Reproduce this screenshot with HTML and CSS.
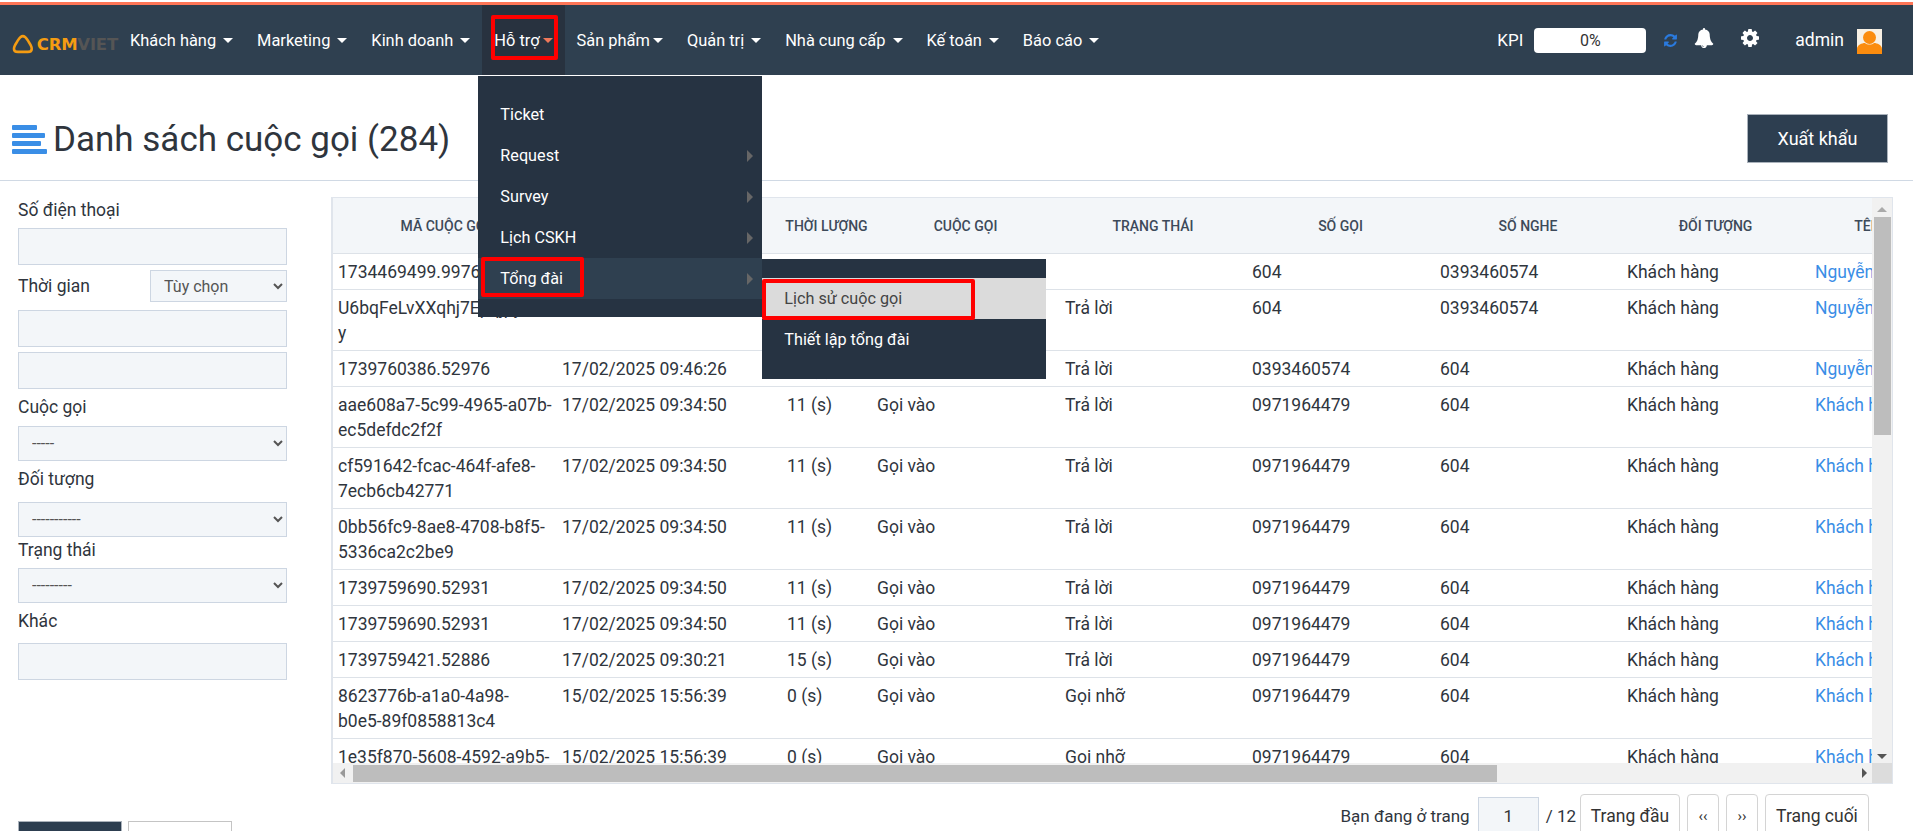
FILE: index.html
```html
<!DOCTYPE html>
<html lang="vi">
<head>
  <meta charset="UTF-8" />
  <title>Danh sách cuộc gọi</title>
  <link rel="stylesheet" href="styles.css">
</head>
<body>
  <nav class="navbar">
    <a class="logo">
      <svg class="logo-mark" viewBox="0 0 22 20"><path d="M11 2 C8 2 7 5 5 8 C3 11 2 13 2 15 C2 17 4 18 6 18 L16 18 C18 18 20 17 20 15 C20 13 19 11 17 8 C15 5 14 2 11 2 Z" /></svg>
      <span class="logo-crm">CRM</span><span class="logo-viet">VIET</span>
    </a>
    <ul class="nav-list">
      <li class="nav-item">Khách hàng <i class="caret"></i></li>
      <li class="nav-item">Marketing <i class="caret"></i></li>
      <li class="nav-item">Kinh doanh <i class="caret"></i></li>
      <li class="nav-item active">Hỗ trợ<i class="caret tight"></i>
        <span class="mark mark-nav"></span>
        <div class="menu">
          <div class="menu-row">Ticket</div>
          <div class="menu-row has-sub">Request</div>
          <div class="menu-row has-sub">Survey</div>
          <div class="menu-row has-sub">Lịch CSKH</div>
          <div class="menu-row has-sub open">Tổng đài
            <span class="mark mark-row"></span>
            <div class="menu submenu">
              <div class="menu-row current">Lịch sử cuộc gọi
                <span class="mark mark-sub"></span>
              </div>
              <div class="menu-row">Thiết lập tổng đài</div>
            </div>
          </div>
        </div>
      </li>
      <li class="nav-item">Sản phẩm<i class="caret tight"></i></li>
      <li class="nav-item">Quản trị <i class="caret"></i></li>
      <li class="nav-item">Nhà cung cấp <i class="caret"></i></li>
      <li class="nav-item">Kế toán <i class="caret"></i></li>
      <li class="nav-item">Báo cáo <i class="caret"></i></li>
    </ul>
    <div class="nav-right">
      <span class="kpi-label">KPI</span>
      <span class="kpi-box">0%</span>
      <svg class="ico ico-refresh" viewBox="0 0 1792 1792"><path d="M1639 1056q0 5-1 7-64 268-268 434.5t-478 166.5q-146 0-282.5-55t-243.5-157l-129 129q-19 19-45 19t-45-19-19-45v-448q0-26 19-45t45-19h448q26 0 45 19t19 45-19 45l-137 137q71 66 161 102t187 36q134 0 250-65t186-179q11-17 53-117 8-23 30-23h192q13 0 22.5 9.5t9.5 22.5zm25-800v448q0 26-19 45t-45 19h-448q-26 0-45-19t-19-45 19-45l138-138q-148-137-349-137-134 0-250 65t-186 179q-11 17-53 117-8 23-30 23h-199q-13 0-22.5-9.5t-9.5-22.5v-7q65-268 270-434.5t480-166.5q146 0 284 55.5t245 156.5l130-129q19-19 45-19t45 19 19 45z"/></svg>
      <svg class="ico ico-bell" viewBox="0 0 1792 1792"><path d="M912 1696q0-16-16-16-59 0-101.5-42.5t-42.5-101.5q0-16-16-16t-16 16q0 73 51.5 124.5t124.5 51.5q16 0 16-16zm816-288q0 52-38 90t-90 38h-448q0 106-75 181t-181 75-181-75-75-181h-448q-52 0-90-38t-38-90q50-42 91-88t85-119.5 74.5-158.5 50-206 19.5-260q0-152 117-282.5t307-158.5q-8-19-8-39 0-40 28-68t68-28 68 28 28 68q0 20-8 39 190 28 307 158.5t117 282.5q0 139 19.5 260t50 206 74.5 158.5 85 119.5 91 88z"/></svg>
      <svg class="ico ico-gear" viewBox="0 0 1536 1536"><path d="M1024 768q0-106-75-181t-181-75-181 75-75 181 75 181 181 75 181-75 75-181zm512-109v222q0 12-8 23t-20 13l-185 28q-19 54-39 91 35 50 107 138 10 12 10 25t-9 23q-27 37-99 108t-94 71q-12 0-26-9l-138-108q-44 23-91 38-16 136-29 186-7 28-36 28h-222q-14 0-24.5-8.5t-11.5-21.5l-28-184q-49-16-90-37l-141 107q-10 9-25 9-14 0-25-11-126-114-165-168-7-10-7-23 0-12 8-23 15-21 51-66.5t54-70.5q-27-50-41-99l-183-27q-13-2-21-12.5t-8-23.5v-222q0-12 8-23t19-13l186-28q14-46 39-92-40-57-107-138-10-12-10-24 0-10 9-23 26-36 98.5-107.5t94.5-71.5q13 0 26 10l138 107q44-23 91-38 16-136 29-186 7-28 36-28h222q14 0 24.5 8.5t11.5 21.5l28 184q49 16 90 37l142-107q9-9 24-9 13 0 25 10 129 119 165 170 7 8 7 22 0 12-8 23-15 21-51 66.5t-54 70.5q26 50 41 98l183 28q13 2 21 12.5t8 23.5z"/></svg>
      <span class="user-name">admin</span>
      <svg class="avatar" viewBox="0 0 25 25"><rect width="25" height="25" fill="#f7f0e4"/><circle cx="12.5" cy="8.5" r="6.5" fill="#fb8c0e"/><path d="M0 25 V20 C0 16 5 14 8 14 C10 16 15 16 17 14 C20 14 25 16 25 20 V25 Z" fill="#fb8c0e"/></svg>
    </div>
  </nav>

  <header class="page-head">
    <h1 class="page-title">
      <span class="title-icon"><i></i><i></i><i></i><i></i></span>
      Danh sách cuộc gọi (284)
    </h1>
    <button type="button" class="btn-dark btn-export">Xuất khẩu</button>
  </header>

  <div class="content">
    <aside class="filters">
      <label class="flabel nudge">Số điện thoại</label>
      <input type="text" class="finput" />
      <div class="time-row">
        <label class="flabel">Thời gian</label>
        <select class="fselect time-select"><option>Tùy chọn</option></select>
      </div>
      <input type="text" class="finput mt-8" />
      <input type="text" class="finput mt-5" />
      <label class="flabel mt-6">Cuộc gọi</label>
      <select class="fselect"><option>-----</option></select>
      <label class="flabel mt-6 low">Đối tượng</label>
      <select class="fselect"><option>-----------</option></select>
      <label class="flabel mt-1">Trạng thái</label>
      <select class="fselect sel-close"><option>---------</option></select>
      <label class="flabel mt-5 low nudge">Khác</label>
      <input type="text" class="finput" />
      <div class="filter-btns">
        <button type="button" class="btn-dark btn-search">Tìm kiếm</button>
        <button type="button" class="btn-light">Xóa bộ lọc</button>
      </div>
    </aside>

    <main class="main-col">
      <div class="table-box">
        <div class="table-view">
          <table class="calls">
            <thead>
              <tr>
                <th>Mã cuộc gọi</th><th>Thời gian</th><th>Thời lượng</th><th>Cuộc gọi</th><th>Trạng thái</th><th>Số gọi</th><th>Số nghe</th><th>Đối tượng</th><th>Tên</th>
              </tr>
            </thead>
            <tbody>
              <tr><td>1734469499.99769</td><td>17/02/2025 09:50:12</td><td>0 (s)</td><td>Gọi ra</td><td></td><td>604</td><td>0393460574</td><td>Khách hàng</td><td><a>Nguyễn Thị Hoa</a></td></tr>
              <tr><td>U6bqFeLvXXqhj7Epqjpy<br>y</td><td>17/02/2025 09:48:40</td><td>32 (s)</td><td>Gọi ra</td><td>Trả lời</td><td>604</td><td>0393460574</td><td>Khách hàng</td><td><a>Nguyễn Thị Hoa</a></td></tr>
              <tr><td>1739760386.52976</td><td>17/02/2025 09:46:26</td><td>11 (s)</td><td>Gọi vào</td><td>Trả lời</td><td>0393460574</td><td>604</td><td>Khách hàng</td><td><a>Nguyễn Thị Hoa</a></td></tr>
              <tr><td>aae608a7-5c99-4965-a07b-ec5defdc2f2f</td><td>17/02/2025 09:34:50</td><td>11 (s)</td><td>Gọi vào</td><td>Trả lời</td><td>0971964479</td><td>604</td><td>Khách hàng</td><td><a>Khách hàng mới</a></td></tr>
              <tr><td>cf591642-fcac-464f-afe8-7ecb6cb42771</td><td>17/02/2025 09:34:50</td><td>11 (s)</td><td>Gọi vào</td><td>Trả lời</td><td>0971964479</td><td>604</td><td>Khách hàng</td><td><a>Khách hàng mới</a></td></tr>
              <tr><td>0bb56fc9-8ae8-4708-b8f5-5336ca2c2be9</td><td>17/02/2025 09:34:50</td><td>11 (s)</td><td>Gọi vào</td><td>Trả lời</td><td>0971964479</td><td>604</td><td>Khách hàng</td><td><a>Khách hàng mới</a></td></tr>
              <tr><td>1739759690.52931</td><td>17/02/2025 09:34:50</td><td>11 (s)</td><td>Gọi vào</td><td>Trả lời</td><td>0971964479</td><td>604</td><td>Khách hàng</td><td><a>Khách hàng mới</a></td></tr>
              <tr><td>1739759690.52931</td><td>17/02/2025 09:34:50</td><td>11 (s)</td><td>Gọi vào</td><td>Trả lời</td><td>0971964479</td><td>604</td><td>Khách hàng</td><td><a>Khách hàng mới</a></td></tr>
              <tr><td>1739759421.52886</td><td>17/02/2025 09:30:21</td><td>15 (s)</td><td>Gọi vào</td><td>Trả lời</td><td>0971964479</td><td>604</td><td>Khách hàng</td><td><a>Khách hàng mới</a></td></tr>
              <tr><td>8623776b-a1a0-4a98-<wbr>b0e5-89f0858813c4</td><td>15/02/2025 15:56:39</td><td>0 (s)</td><td>Gọi vào</td><td>Gọi nhỡ</td><td>0971964479</td><td>604</td><td>Khách hàng</td><td><a>Khách hàng mới</a></td></tr>
              <tr><td>1e35f870-5608-4592-a9b5-3d1c7a90be21</td><td>15/02/2025 15:56:39</td><td>0 (s)</td><td>Gọi vào</td><td>Gọi nhỡ</td><td>0971964479</td><td>604</td><td>Khách hàng</td><td><a>Khách hàng mới</a></td></tr>
            </tbody>
          </table>
        </div>
        <div class="vbar">
          <i class="arrow arrow-up"></i>
          <div class="vthumb"></div>
          <i class="arrow arrow-down"></i>
        </div>
        <div class="hbar">
          <i class="arrow arrow-left"></i>
          <div class="hthumb"></div>
          <i class="arrow arrow-right"></i>
        </div>
        <div class="corner"></div>
      </div>

      <div class="pager">
        <span class="pager-text">Bạn đang ở trang</span>
        <input type="text" class="pager-input" value="1" />
        <span class="pager-total">/ 12</span>
        <button type="button" class="page-btn btn-first">Trang đầu</button>
        <button type="button" class="page-btn btn-step">‹‹</button>
        <button type="button" class="page-btn btn-step">››</button>
        <button type="button" class="page-btn btn-last">Trang cuối</button>
      </div>
    </main>
  </div>
</body>
</html>
```

FILE: styles.css
```css
html, body {
  margin: 0;
  height: 831px;
  overflow: hidden;
  background: #fff;
}
body {
  font-family: Roboto, "Liberation Sans", sans-serif;
  font-size: 17.5px;
  color: #2f353d;
}

/* top bar */
.navbar {
  display: flex;
  align-items: center;
  height: 70px;
  margin-top: 2px;
  border-top: 3px solid #ff7657;
  background: #2f4050;
  color: #fff;
}
.logo {
  display: flex;
  align-items: center;
  width: 118px;
  padding: 8px 0 0 12px;
  box-sizing: border-box;
  flex-shrink: 0;
  font-family: "DejaVu Sans", sans-serif;
  font-weight: 700;
  font-size: 16.5px;
  letter-spacing: -0.2px;
}
.logo-mark {
  width: 22px;
  height: 22px;
  margin-right: 3px;
  fill: none;
  stroke: #f59c12;
  stroke-width: 2.6;
}
.logo-crm { color: #f59c12; }
.logo-viet { color: #555; }
.nav-list {
  display: flex;
  list-style: none;
  margin: 0;
  padding: 0;
  height: 100%;
}
.nav-item {
  position: relative;
  display: flex;
  align-items: center;
  padding: 0 12px;
  font-size: 16.4px;
  white-space: nowrap;
}
.nav-item.active {
  background: #28323f;
}
.caret {
  display: inline-block;
  margin-left: 7px;
  border-left: 5px solid transparent;
  border-right: 5px solid transparent;
  border-top: 5px solid #fff;
}
.caret.tight {
  margin-left: 3px;
}
.active .caret {
  border-top-color: #f0785a;
}
.nav-right {
  display: flex;
  align-items: center;
  margin-left: auto;
  padding-right: 31px;
  height: 100%;
}
.kpi-label {
  font-size: 17px;
  margin-right: 11px;
}
.kpi-box {
  width: 112px;
  height: 25px;
  line-height: 25px;
  margin-right: 17px;
  background: #fff;
  border-radius: 4px;
  color: #333;
  font-size: 16px;
  text-align: center;
}
.ico {
  fill: #fff;
}
.ico-refresh {
  width: 15px;
  height: 15px;
  fill: #2a7ade;
  margin-right: 16px;
}
.ico-bell {
  width: 20px;
  height: 20px;
  margin-right: 27px;
  margin-top: -4px;
}
.ico-gear {
  width: 18px;
  height: 18px;
  margin-right: 36px;
  margin-top: -4px;
}
.user-name {
  font-size: 17.5px;
  margin-right: 13px;
}
.avatar {
  width: 25px;
  height: 25px;
  margin-top: 3px;
}

/* dropdown */
.menu {
  position: absolute;
  z-index: 5;
  top: 71px;
  left: -4px;
  width: 284px;
  padding: 18px 0;
  background: #263342;
  font-size: 16.2px;
}
.menu-row {
  position: relative;
  height: 41px;
  line-height: 41px;
  padding-left: 22px;
  color: #fff;
}
.has-sub::after {
  content: "";
  position: absolute;
  right: 9px;
  top: 15px;
  border-top: 6px solid transparent;
  border-bottom: 6px solid transparent;
  border-left: 6px solid #666;
}
.menu-row.open {
  background: #2f4050;
}
.submenu {
  top: 1px;
  left: 284px;
  padding: 19px 0;
}
.menu-row.current {
  background: #dbdbdb;
  color: #444;
}
.mark {
  position: absolute;
  box-sizing: border-box;
  border: 4px solid #f00;
  border-radius: 2px;
}
.mark-nav {
  left: 9px;
  top: 10px;
  width: 67px;
  height: 45px;
}
.mark-row {
  left: 3px;
  top: -1px;
  width: 103px;
  height: 40px;
}
.mark-sub {
  left: 0;
  top: 1px;
  width: 213px;
  height: 41px;
}

/* page head */
.page-head {
  display: flex;
  align-items: center;
  justify-content: space-between;
  box-sizing: border-box;
  height: 106px;
  padding: 21px 25px 0 12px;
  border-bottom: 1px solid #d0d9e4;
}
.page-title {
  display: flex;
  align-items: center;
  margin: 2px 0 0;
  font-size: 35px;
  font-weight: 400;
  color: #2f353d;
}
.title-icon {
  display: flex;
  flex-direction: column;
  gap: 3px;
  width: 35px;
  margin-right: 6px;
}
.title-icon i {
  display: block;
  height: 5px;
  border-radius: 1px;
  background: #3a8ee6;
}
.title-icon i:nth-child(1) { width: 25px; }
.title-icon i:nth-child(2) { width: 33px; }
.title-icon i:nth-child(3) { width: 29px; }
.title-icon i:nth-child(4) { width: 35px; }
.btn-dark {
  background: #2d3e50;
  border: 1px solid #aab2bb;
  color: #fff;
  font-family: inherit;
}
.btn-export {
  width: 141px;
  height: 49px;
  font-size: 18px;
}

/* filters */
.content {
  display: flex;
  padding: 16px 20px 0 18px;
}
.filters {
  display: flex;
  flex-direction: column;
  flex-shrink: 0;
  width: 269px;
  margin-right: 44px;
}
.flabel {
  display: block;
  height: 24px;
  line-height: 24px;
  margin-bottom: 7px;
}
.flabel.nudge {
  line-height: 26px;
}
.flabel.low {
  margin-bottom: 11px;
}
.finput, .fselect {
  box-sizing: border-box;
  width: 100%;
  background: #f3f6f9;
  border: 1px solid #cdd6e2;
  font-family: inherit;
  font-size: 16px;
  color: #555;
}
.finput {
  height: 37px;
}
.fselect {
  height: 35px;
  padding-left: 9px;
}
.sel-close {
  margin-top: -1px;
}
.time-row {
  display: flex;
  align-items: center;
  justify-content: space-between;
  margin-top: 5px;
}
.time-row .flabel {
  margin-bottom: 0;
}
.time-select {
  width: 137px;
  height: 32px;
}
.mt-8 { margin-top: 8px; }
.mt-6 { margin-top: 6px; }
.mt-5 { margin-top: 5px; }
.mt-1 { margin-top: 1px; }
.filter-btns {
  display: flex;
  gap: 6px;
  margin-top: 141px;
}
.btn-search, .btn-light {
  width: 104px;
  height: 44px;
  font-size: 17px;
  flex-shrink: 0;
}
.btn-light {
  background: #fff;
  border: 1px solid #c4c4c4;
  font-family: inherit;
}

/* table */
.main-col {
  flex: 1;
  min-width: 0;
}
.table-box {
  display: grid;
  grid-template-columns: 1fr 20px;
  grid-template-rows: 1fr 20px;
  height: 587px;
  box-sizing: border-box;
  border: 1px solid #e0e5ec;
  border-left-width: 2px;
}
.table-view {
  overflow: hidden;
  min-width: 0;
}
.calls {
  table-layout: fixed;
  width: 1592px;
  margin-left: -1px;
  border-collapse: collapse;
}
.calls th {
  height: 55px;
  padding: 0 0 0 3px;
  background: #f3f6f9;
  border-bottom: 1px solid #dde2e8;
  font-size: 14px;
  font-weight: 500;
  text-transform: uppercase;
  color: #3d4a5a;
}
.calls th:nth-child(1) { width: 220px; }
.calls th:nth-child(2) { width: 222px; }
.calls th:nth-child(3) { width: 87px; }
.calls th:nth-child(4) { width: 185px; }
.calls th:nth-child(5) { width: 184px; }
.calls th:nth-child(6) { width: 185px; }
.calls th:nth-child(7) { width: 184px; }
.calls th:nth-child(8) { width: 185px; }
.calls td {
  padding: 6px 7px 4px;
  line-height: 25px;
  vertical-align: top;
  border-bottom: 1px solid #dde2e8;
  overflow-wrap: anywhere;
}
.calls td:first-child {
  padding: 6px 3px 4px 6px;
}
.calls td:last-child {
  white-space: nowrap;
}
.calls a {
  color: #3a8ee6;
}

/* fake scrollbars, the page itself is clipped to the window */
.vbar, .hbar {
  display: flex;
  align-items: center;
  background: #f1f1f1;
}
.vbar {
  flex-direction: column;
}
.vthumb {
  width: 17px;
  height: 218px;
  margin-top: 5px;
  background: #bdbdbd;
}
.hthumb {
  width: 1144px;
  height: 17px;
  margin-left: 8px;
  background: #bdbdbd;
}
.corner {
  background: #dcdcdc;
}
.arrow {
  display: block;
  width: 0;
  height: 0;
}
.arrow-up {
  margin-top: 9px;
  border-left: 5px solid transparent;
  border-right: 5px solid transparent;
  border-bottom: 5px solid #aaa;
}
.arrow-down {
  margin-top: auto;
  margin-bottom: 4px;
  border-left: 5px solid transparent;
  border-right: 5px solid transparent;
  border-top: 5px solid #555;
}
.arrow-left {
  margin-left: 7px;
  border-top: 5px solid transparent;
  border-bottom: 5px solid transparent;
  border-right: 5px solid #999;
}
.arrow-right {
  margin-left: auto;
  margin-right: 5px;
  border-top: 5px solid transparent;
  border-bottom: 5px solid transparent;
  border-left: 5px solid #555;
}

/* pager */
.pager {
  display: flex;
  align-items: flex-start;
  justify-content: flex-end;
  margin-top: 10px;
  padding-right: 24px;
}
.pager-text, .pager-total {
  line-height: 44px;
  font-size: 17px;
}
.pager-input {
  box-sizing: border-box;
  width: 61px;
  height: 38px;
  margin: 3px 7px 0 8px;
  background: #f3f6f9;
  border: 1px solid #cdd6e2;
  font-family: inherit;
  font-size: 17px;
  text-align: center;
  color: #333;
}
.pager-total {
  margin-right: 4px;
}
.page-btn {
  box-sizing: border-box;
  height: 44px;
  padding: 0;
  background: #fff;
  border: 1px solid #d4d4d4;
  border-radius: 4px;
  font-family: inherit;
  font-size: 17.5px;
  color: #333;
}
.btn-first { width: 100px; margin-right: 7px; }
.btn-step { width: 32px; margin-right: 7px; font-size: 15px; }
.btn-last { width: 104px; }
```
